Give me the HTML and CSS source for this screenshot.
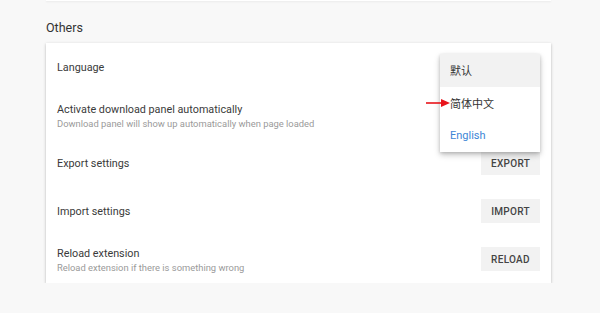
FILE: index.html
```html
<!DOCTYPE html>
<html>
<head>
<meta charset="utf-8">
<link rel="stylesheet" href="styles.css">
</head>
<body>
<div class="page">
  <div class="prev-card"></div>
  <h2 class="section-title">Others</h2>
  <div class="card">
    <div class="row">
      <div class="label"><div class="title">Language</div></div>
    </div>
    <div class="row">
      <div class="label two">
        <div class="title">Activate download panel automatically</div>
        <div class="sub">Download panel will show up automatically when page loaded</div>
      </div>
    </div>
    <div class="row">
      <div class="label"><div class="title">Export settings</div></div>
      <button class="btn">EXPORT</button>
    </div>
    <div class="row">
      <div class="label"><div class="title">Import settings</div></div>
      <button class="btn">IMPORT</button>
    </div>
    <div class="row">
      <div class="label two">
        <div class="title">Reload extension</div>
        <div class="sub">Reload extension if there is something wrong</div>
      </div>
      <button class="btn">RELOAD</button>
    </div>

    <ul class="menu">
      <li class="menu-item active">默认</li>
      <li class="menu-item">简体中文</li>
      <li class="menu-item selected">English</li>
    </ul>
    <svg class="arrow" width="24" height="10" viewBox="0 0 24 10">
      <line x1="0" y1="5" x2="16" y2="5" stroke="#e8141b" stroke-width="1.6"/>
      <polygon points="15,1 24,5 15,9" fill="#e8141b"/>
    </svg>
  </div>
</div>
</body>
</html>
```
FILE: styles.css
```css
html, body {
  margin: 0;
  padding: 0;
  background: #f8f8f8;
  font-family: Roboto, "Noto Sans CJK SC", sans-serif;
  color: #333;
}
.page {
  width: 505px;
  margin-left: 46px;
}
.prev-card {
  height: 1px;
  background: #fff;
  box-shadow: 0 1px 2px rgba(0,0,0,0.08);
}
.section-title {
  margin: 0 0 6px 0;
  padding-top: 18px;
  font-size: 12.5px;
  font-weight: 400;
  line-height: 18px;
  color: #333;
}
.card {
  position: relative;
  background: #fff;
  box-shadow: 0 1px 3px rgba(0,0,0,0.22), 0 1px 1px rgba(0,0,0,0.1);
}
.row {
  height: 48px;
  display: flex;
  align-items: center;
  justify-content: space-between;
  padding: 0 11px 0 11px;
}
.label {
  padding-top: 0;
}
.label.two {
  padding-top: 3px;
}
.title {
  font-size: 10.8px;
  line-height: 15px;
  color: #3a3a3a;
}
.sub {
  font-size: 9.4px;
  line-height: 14px;
  color: #9a9a9a;
}
.btn {
  width: 59px;
  height: 24px;
  border: none;
  background: #f2f2f2;
  font-family: Roboto, sans-serif;
  font-size: 10px;
  font-weight: 500;
  letter-spacing: 0.3px;
  color: #444;
  padding: 0;
}
.menu {
  position: absolute;
  top: 11px;
  left: 394px;
  width: 100px;
  margin: 0;
  padding: 0;
  list-style: none;
  background: #fff;
  box-shadow: 0 3px 6px rgba(0,0,0,0.22), 0 1px 3px rgba(0,0,0,0.15);
}
.menu-item {
  height: 32.7px;
  display: flex;
  align-items: center;
  padding-left: 10px;
  font-size: 11px;
  color: #333;
}
.menu-item.active {
  background: #f2f2f2;
}
.menu-item.selected {
  color: #3d86d6;
}
.arrow {
  position: absolute;
  left: 380px;
  top: 55px;
}
```
